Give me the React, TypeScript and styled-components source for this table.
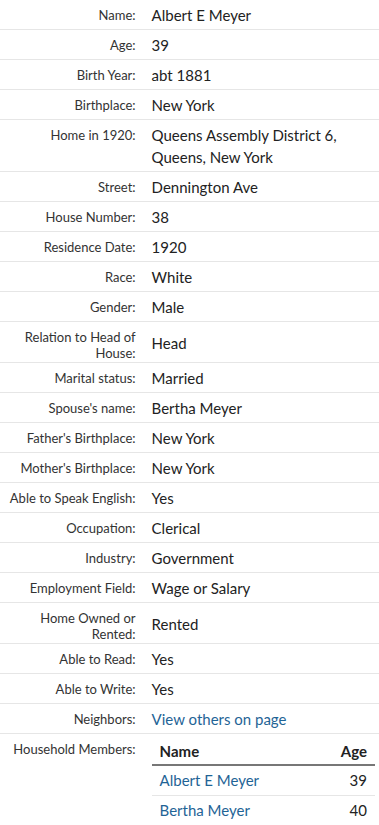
import styled, { createGlobalStyle } from "styled-components"

const GlobalStyle = createGlobalStyle`
    body {
        margin: 0;
        background: #fff;
        font-family: Lato, "Noto Sans", "Liberation Sans", sans-serif;
        color: #333;
    }
`

type Field = { label: string; value: string; link?: boolean }

const fields: Field[] = [
    { label: "Name:", value: "Albert E Meyer" },
    { label: "Age:", value: "39" },
    { label: "Birth Year:", value: "abt 1881" },
    { label: "Birthplace:", value: "New York" },
    { label: "Home in 1920:", value: "Queens Assembly District 6, Queens, New York" },
    { label: "Street:", value: "Dennington Ave" },
    { label: "House Number:", value: "38" },
    { label: "Residence Date:", value: "1920" },
    { label: "Race:", value: "White" },
    { label: "Gender:", value: "Male" },
    { label: "Relation to Head of House:", value: "Head" },
    { label: "Marital status:", value: "Married" },
    { label: "Spouse's name:", value: "Bertha Meyer" },
    { label: "Father's Birthplace:", value: "New York" },
    { label: "Mother's Birthplace:", value: "New York" },
    { label: "Able to Speak English:", value: "Yes" },
    { label: "Occupation:", value: "Clerical" },
    { label: "Industry:", value: "Government" },
    { label: "Employment Field:", value: "Wage or Salary" },
    { label: "Home Owned or Rented:", value: "Rented" },
    { label: "Able to Read:", value: "Yes" },
    { label: "Able to Write:", value: "Yes" },
    { label: "Neighbors:", value: "View others on page", link: true },
]

const members = [
    { name: "Albert E Meyer", age: "39" },
    { name: "Bertha Meyer", age: "40" },
]

export default () => {
    return (
        <>
            <GlobalStyle />
            <Record>
                {fields.map((f) => (
                    <Row key={f.label}>
                        <Label>{f.label}</Label>
                        <Value>{f.link ? <Link href="#">{f.value}</Link> : f.value}</Value>
                    </Row>
                ))}
                <Row>
                    <Label>Household Members:</Label>
                    <Value $top>
                        <Members>
                            <thead>
                                <tr>
                                    <Head>Name</Head>
                                    <Head $right>Age</Head>
                                </tr>
                            </thead>
                            <tbody>
                                {members.map((m) => (
                                    <tr key={m.name}>
                                        <Cell><Link href="#">{m.name}</Link></Cell>
                                        <Cell $right>{m.age}</Cell>
                                    </tr>
                                ))}
                            </tbody>
                        </Members>
                    </Value>
                </Row>
            </Record>
        </>
    )
}

const Record = styled.div`
    width: 379px;
`

const Row = styled.div`
    display: grid;
    grid-template-columns: 40% 1fr;
    border-bottom: 1px solid #e6e6e6;
    &:last-child {
        border-bottom: none;
    }
`

// label sits at the top, value is centred against it
const Label = styled.div`
    align-self: start;
    text-align: right;
    padding: 7px 16px 1px 0;
    font-size: 13px;
    line-height: 16px;
    color: #333;
`

const Value = styled.div<{ $top?: boolean }>`
    align-self: ${(p) => (p.$top ? "start" : "center")};
    padding: 4px 4px 3px 0;
    font-size: 15px;
    line-height: 22px;
    color: #222;
`

const Link = styled.a`
    color: #1f6496;
    text-decoration: none;
`

const Members = styled.table`
    width: 100%;
    border-collapse: collapse;
`

const Head = styled.th<{ $right?: boolean }>`
    text-align: ${(p) => (p.$right ? "right" : "left")};
    padding: 2px 8px 2px;
    font-size: 15px;
    line-height: 22px;
    font-weight: 700;
    color: #222;
    border-bottom: 2px solid #777;
`

const Cell = styled.td<{ $right?: boolean }>`
    text-align: ${(p) => (p.$right ? "right" : "left")};
    padding: 3px 8px 4px;
    font-size: 15px;
    line-height: 22px;
    border-bottom: 1px solid #e6e6e6;
    tr:last-child > & {
        border-bottom: none;
    }
`
